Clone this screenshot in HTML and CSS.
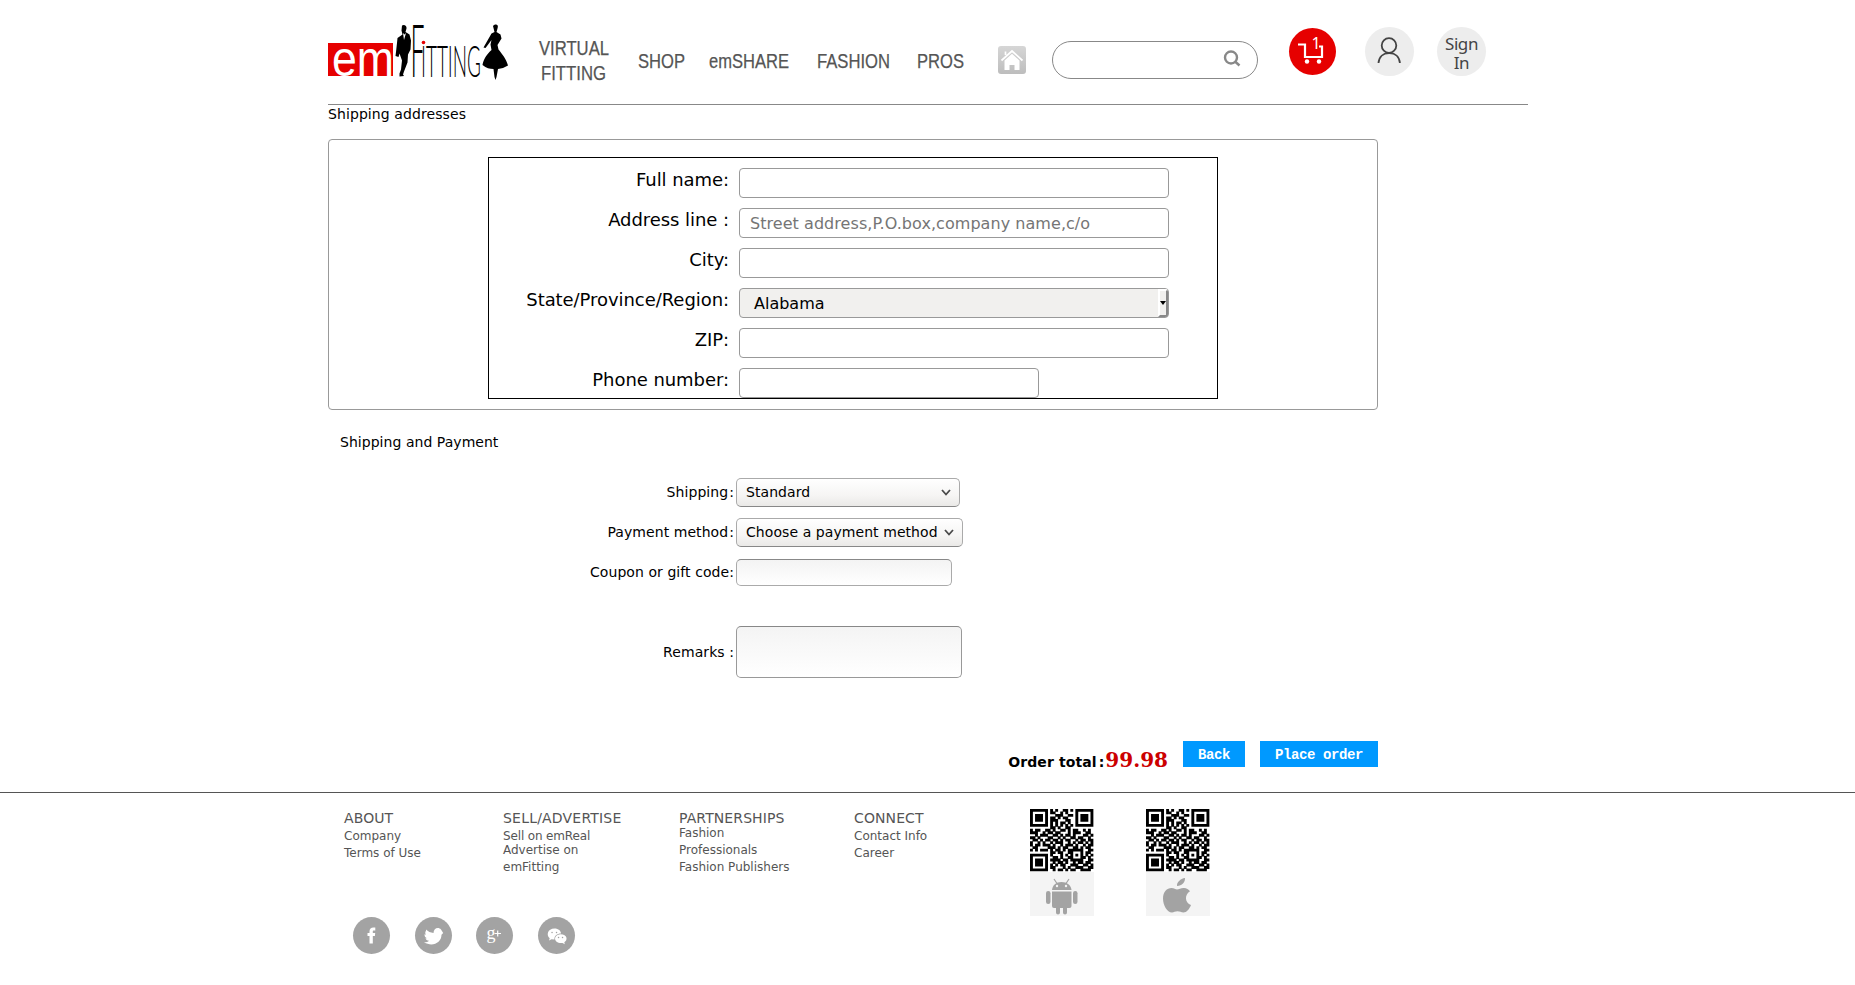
FILE: index.html
```html
<!DOCTYPE html>
<html lang="en">
<head>
<meta charset="utf-8">
<title>emFitting - Checkout</title>
<link rel="stylesheet" href="styles.css">
</head>
<body>
<header class="header">
  <svg class="logo" width="184" height="64" viewBox="0 0 184 64">
    <rect y="23" width="65" height="33" fill="#e60000"/>
    <text class="logo-em" x="4" y="55.500" textLength="62" lengthAdjust="spacingAndGlyphs">em</text>
    <path d="M74 5.500c2-1.500 5 0 4.500 3l-1 3.500 4 2.500 1.500 6-.5 9-2.500 5-.5 8-3.500 9-1 3 1 1.500-4.500.5v-3l1.500-4 1-9-2.500-7-1 3.500-3-1 .5-4 1-9 .5-5 5-3.500-1-4z"/>
    <path d="M75 13l1 7 2-7-1.500 1.500z" fill="#fff"/>
    <text class="logo-f" x="82.500" y="56.500" textLength="14" lengthAdjust="spacingAndGlyphs">F</text>
    <text class="logo-rest" x="93" y="56.500" textLength="60" lengthAdjust="spacingAndGlyphs">ITTING</text>
    <circle cx="95.500" cy="22.500" r="1.800" fill="#e60000"/>
    <path d="M165 6c3-3 6-1 4.500 2.500l-1 3.500 4 2.500 1 4-4 6.500 1 4.500c4 5 7.500 9 9.500 16l-5 2.500-5 1-1.500 8-1 3-1-3-1-8c-4 0-7-1-11-4 1-6 4.500-11 9-15l-1-5.500 1-4.500-6 8-2-.5 8-14 3-1.500z"/>
  </svg>
  <nav class="nav">
    <svg class="nav-virtual" width="74" height="56"><text x="1" y="19" textLength="70" lengthAdjust="spacingAndGlyphs">VIRTUAL</text><text x="3" y="44" textLength="65" lengthAdjust="spacingAndGlyphs">FITTING</text></svg>
    <svg class="nav-shop" width="48" height="30"><text x="0" y="20" textLength="47" lengthAdjust="spacingAndGlyphs">SHOP</text></svg>
    <svg class="nav-share" width="82" height="30"><text x="0" y="20" textLength="80" lengthAdjust="spacingAndGlyphs">emSHARE</text></svg>
    <svg class="nav-fashion" width="76" height="30"><text x="0" y="20" textLength="73" lengthAdjust="spacingAndGlyphs">FASHION</text></svg>
    <svg class="nav-pros" width="50" height="30"><text x="0" y="20" textLength="47" lengthAdjust="spacingAndGlyphs">PROS</text></svg>
  </nav>
  <svg class="home" width="28" height="28" viewBox="0 0 28 28">
    <defs><linearGradient id="hg" x1="0" y1="0" x2="0" y2="1"><stop offset="0" stop-color="#d6d6d6"/><stop offset="1" stop-color="#bdbdbd"/></linearGradient></defs>
    <rect width="28" height="28" rx="3" fill="url(#hg)"/>
    <path d="M7.500 9V5.500M3.500 14.500L14 5l10.500 9.500" fill="none" stroke="#fff" stroke-width="1.700"/>
    <path d="M6.500 14.500L14 7.800l7.500 6.700V24h-5v-5h-5v5h-5z" fill="#fff"/>
  </svg>
  <div class="search">
    <svg width="18" height="18" viewBox="0 0 18 18" fill="none" stroke="#888" stroke-width="2.400"><circle cx="8" cy="7.500" r="6"/><path d="M12 11.500l4.500 4"/></svg>
  </div>
  <svg class="cart" width="47" height="47" viewBox="0 0 47 47">
    <circle cx="23.500" cy="23.500" r="23.500" fill="#e60000"/>
    <path d="M9 16.500h7V29h17V18.500h-3" fill="none" stroke="#fff" stroke-width="2.200"/>
    <circle cx="18" cy="33.500" r="2.200" fill="#fff"/><circle cx="30" cy="33.500" r="2.200" fill="#fff"/>
    <text class="cart-count" x="22.500" y="21">1</text>
  </svg>
  <svg class="user" width="49" height="49" viewBox="0 0 49 49">
    <circle cx="24.500" cy="24.500" r="24.500" fill="#ededed"/>
    <g fill="none" stroke="#444" stroke-width="1.800"><circle cx="24" cy="18.500" r="7.300"/><path d="M13.500 36c.5-6.500 5-10 10.700-10s10.200 3.500 10.700 10"/></g>
  </svg>
  <div class="signin">Sign<br>In</div>
</header>

<main class="main">
  <h2 class="title">Shipping addresses</h2>
  <section class="panel">
    <form class="address">
      <div class="row"><label>Full name:</label><input type="text"></div>
      <div class="row"><label>Address line :</label><input type="text" placeholder="Street address,P.O.box,company name,c/o"></div>
      <div class="row"><label>City:</label><input type="text"></div>
      <div class="row"><label>State/Province/Region:</label><div class="state"><span>Alabama</span><i class="state-btn"><svg width="6" height="4"><path d="M0 0h6L3 4z"/></svg></i></div></div>
      <div class="row"><label>ZIP:</label><input type="text"></div>
      <div class="row"><label>Phone number:</label><input class="phone" type="text"></div>
    </form>
  </section>
  <h2 class="title pay-title">Shipping and Payment</h2>
  <section class="pay">
    <div class="pay-row"><label>Shipping<b>:</b></label><div class="drop drop-ship">Standard<svg width="10" height="7"><path d="M1 1l4 4.500L9 1"/></svg></div></div>
    <div class="pay-row"><label>Payment method<b>:</b></label><div class="drop drop-method">Choose a payment method<svg width="10" height="7"><path d="M1 1l4 4.500L9 1"/></svg></div></div>
    <div class="pay-row"><label>Coupon or gift code:</label><input class="coupon" type="text"></div>
    <div class="pay-row remarks-row"><label>Remarks :</label><div class="remarks"></div></div>
  </section>
  <div class="order">
    <span class="order-label">Order total<b>:</b></span><span class="price">99.98</span>
    <div class="btn back">Back</div><div class="btn place">Place order</div>
  </div>
</main>

<footer class="footer">
  <div class="foot">
    <div class="links">
      <div class="col about"><h3>ABOUT</h3><a>Company</a><a>Terms of Use</a></div>
      <div class="col sell"><h3>SELL/ADVERTISE</h3><a class="tight">Sell on emReal</a><a>Advertise on</a><a>emFitting</a></div>
      <div class="col partner"><h3>PARTNERSHIPS</h3><a>Fashion</a><a>Professionals</a><a>Fashion Publishers</a></div>
      <div class="col connect"><h3>CONNECT</h3><a>Contact Info</a><a>Career</a></div>
      <div class="app">
        <svg class="qr" width="63" height="62" viewBox="0 0 25 25" preserveAspectRatio="none"></svg>
        <div class="platform"><svg width="34" height="37" viewBox="0 0 34 37" fill="#a3a3a3"><path d="M7 12C7.500 7 11 4 16.500 4S26 7 26.500 12z"/><path d="M9 1l3 4.500M24 1l-3 4.500" stroke="#a3a3a3" stroke-width="1.200"/><circle cx="12" cy="8" r="1.200" fill="#f4f4f4"/><circle cx="21" cy="8" r="1.200" fill="#f4f4f4"/><path d="M7 13.500h19.500V28q0 2-2 2h-2.500v4.500q0 2-2 2t-2-2V30h-3v4.500q0 2-2 2t-2-2V30H9q-2 0-2-2z"/><rect x="1" y="13" width="4.500" height="13" rx="2.200"/><rect x="28" y="13" width="4.500" height="13" rx="2.200"/></svg></div>
      </div>
      <div class="app">
        <svg class="qr" width="63" height="62" viewBox="0 0 25 25" preserveAspectRatio="none"></svg>
        <div class="platform"><svg width="34" height="37" viewBox="0 0 34 37" fill="#a3a3a3"><path d="M24 0c.3 4-3 7.800-8 8C15.500 4.500 19.500.5 24 0z"/><path d="M16 11.500c2 0 4-1.700 7-1.500 2.500.2 4.700 1.300 6 3.300-6 3.800-5 11.500 1 13.700-1.500 4-4.500 7.500-7.500 7.500-2.500 0-3.500-1.200-6-1.200s-3.500 1.200-5.500 1.200C6 34.500 2 27 2 20.500S6 10 10.500 10c2.500 0 4 1.500 5.500 1.500z"/></svg></div>
      </div>
    </div>
    <div class="social">
      <svg width="37" height="37" viewBox="0 0 37 37"><circle cx="18.500" cy="18.500" r="18.500"/><path fill="#fff" d="M16.500 26.500V19h-2v-3h2v-1.500c0-2.500 1.500-4 4-4h1.800v3h-1.400c-1 0-1.100.5-1.100 1.200V16h2.400l-.3 3h-2.100v7.500z"/></svg>
      <svg width="37" height="37" viewBox="0 0 37 37"><circle cx="18.500" cy="18.500" r="18.500"/><path fill="#fff" d="M11 12.500c2 2 4.500 3.200 7.500 3.500 0-5 5-6.500 7.500-3.500l2.200 3.500-1.700 1.800c0 8-9 12.500-17.500 7.500 2.500 0 4-.3 5-1.500-2 0-3-1-3.500-2.500h1.500c-2-1-2.500-2-2.500-4l1.500.5c-1-1.300-1-2.500 0-4z"/></svg>
      <svg width="37" height="37" viewBox="0 0 37 37"><circle cx="18.500" cy="18.500" r="18.500"/><text class="gplus" x="10.500" y="22">g</text><path d="M18.500 16.500h6.500M21.700 13.500v6" stroke="#fff" stroke-width="1.200"/></svg>
      <svg width="37" height="37" viewBox="0 0 37 37"><circle cx="18.500" cy="18.500" r="18.500"/><path fill="#fff" d="M16.500 11.500c4 0 6.500 2.500 6.500 5-4 0-7 2.500-6.500 6l-3-.2-2.500 1.200.7-2.300C8 18.500 9.500 11.500 16.500 11.500z"/><path fill="#fff" d="M22.500 17.200c7 0 7.500 6 3.800 8l.5 2-2.300-1.200c-9.500.8-9.500-8.500-2-8.800z"/><path stroke="#a3a3a3" stroke-width="1.400" stroke-linecap="round" d="M14 15.500h.1M18.500 15.500h.1M20.500 20.500h.1M24.500 20.500h.1"/></svg>
    </div>
  </div>
</footer>
<script src="qr.js"></script>
</body>
</html>
```
FILE: styles.css
```css
* { box-sizing: border-box; }
body { margin: 0; background: #fff; color: #000; font-family: "DejaVu Sans", sans-serif; font-size: 14px; }
svg { display: block; flex: none; overflow: visible; }
.header { width: 1200px; height: 105px; margin-left: 328px; border-bottom: 1px solid #888; display: flex; align-items: flex-start; }
.logo { margin-top: 20px; }
.logo-em { font: 50px "Liberation Sans", sans-serif; fill: #fff; }
.logo-f { font: 300 72px Lato, "Liberation Sans", sans-serif; }
.logo-rest { font: 300 43px Lato, "Liberation Sans", sans-serif; }
.nav { display: flex; margin-left: 26px; font: 20px "Liberation Sans Narrow", "Liberation Sans", sans-serif; fill: #555; stroke: #555; stroke-width: .25px; }
.nav-virtual { margin-top: 36px; }
.nav-shop { margin: 48px 0 0 26px; }
.nav-share { margin: 48px 0 0 23px; }
.nav-fashion { margin: 48px 0 0 26px; }
.nav-pros { margin: 48px 0 0 24px; }
.home { margin: 46px 0 0 31px; }
.search { flex: none; width: 206px; height: 38px; margin: 41px 0 0 26px; border: 1px solid #888; border-radius: 19px; display: flex; justify-content: flex-end; padding: 8px 16px 0 0; }
.cart { margin: 28px 0 0 31px; }
.cart-count { font: 16px "Noto Sans", sans-serif; fill: #fff; }
.user { margin: 27px 0 0 29px; }
.signin { flex: none; width: 49px; height: 49px; margin: 27px 0 0 23px; border-radius: 50%; background: #ededed; color: #444; font: 17px/19px "Noto Sans", sans-serif; letter-spacing: -.4px; text-align: center; padding-top: 7px; }
.main { width: 1050px; margin-left: 328px; }
.title { margin: 0; font-size: 14px; font-weight: 400; line-height: 18px; letter-spacing: .09px; }
.panel { margin-top: 16px; height: 271px; border: 1px solid #999; border-radius: 4px; padding: 17px 0 0 159px; }
.address { width: 730px; height: 242px; border: 1px solid #000; }
.row { display: flex; height: 40px; }
.row label { width: 240px; height: 40px; text-align: right; font-size: 18px; line-height: 44px; letter-spacing: -.06px; }
.row input, .state { width: 430px; height: 30px; margin: 10px 0 0 10px; border: 1px solid #999; border-radius: 4px; background: #fff; padding: 0 10px; font: 16px "DejaVu Sans", sans-serif; }
.row input::placeholder { color: #757575; letter-spacing: .05px; }
.row input.phone { width: 300px; }
.state { display: flex; justify-content: space-between; background: #f1f0ee; padding: 0 0 0 14px; line-height: 29px; overflow: hidden; }
.state-btn { width: 10px; height: 28px; background: #f1f0ee; border: 2px solid #fff; border-right-color: #888; border-bottom-color: #888; padding-top: 10px; }
.pay-title { margin: 23px 0 0 12px; letter-spacing: .04px; }
.pay { padding-top: 21px; letter-spacing: .07px; }
.pay-row { display: flex; align-items: center; height: 40px; }
.pay-row label { width: 406px; margin-right: 2px; text-align: right; line-height: 20px; }
.pay-row b { font-weight: 400; margin-left: 1px; }
.drop { height: 29px; margin-top: 1px; border: 1px solid #aaa; border-bottom-color: #888; border-radius: 5px; background: linear-gradient(#fff, #f6f5f4 60%, #eae9e7); display: flex; align-items: center; justify-content: space-between; padding: 0 8px 1px 9px; white-space: nowrap; }
.drop path { fill: none; stroke: #4a4a4a; stroke-width: 1.8; }
.drop-ship { width: 224px; }
.drop-method { width: 227px; }
.coupon { width: 216px; height: 27px; border: 1px solid #aaa; border-top-color: #888; border-radius: 5px; background: linear-gradient(#f3f3f3, #fff); }
.remarks-row { margin-top: 40px; }
.remarks { width: 226px; height: 52px; border: 1px solid #999; border-top-color: #888; border-radius: 5px; background: linear-gradient(#f4f4f4, #fff); }
.order { display: flex; justify-content: flex-end; margin-top: 69px; height: 51px; }
.order-label { font-weight: 700; line-height: 20px; padding-top: 11px; letter-spacing: .1px; }
.order-label b { margin: 0 1px 0 2px; }
.price { color: #c00; font: bold 20px/24px "DejaVu Serif", serif; padding-top: 7px; }
.btn { height: 26px; background: #09f; color: #fff; font: bold 14px/28px "Liberation Mono", monospace; letter-spacing: -.4px; text-align: center; }
.back { width: 62px; margin-left: 15px; }
.place { width: 118px; margin-left: 15px; }
.footer { border-top: 1px solid #555; color: #555; }
.foot { margin-left: 344px; }
.links { display: flex; height: 124px; }
.col { padding-top: 16px; }
.col h3 { margin: 0 0 1px; font-size: 14px; font-weight: 400; line-height: 18px; letter-spacing: .1px; }
.col a { display: block; font-size: 12px; line-height: 17px; }
.col .tight { margin-top: 3px; line-height: 12px; }
.about { width: 159px; }
.sell { width: 176px; }
.sell h3 { letter-spacing: .2px; }
.sell .tight { letter-spacing: -.15px; }
.partner { width: 175px; }
.partner h3 { margin-bottom: -2px; }
.connect { width: 176px; }
.app { width: 116px; padding-top: 16px; }
.platform { width: 64px; height: 44px; margin-top: 1px; background: #f4f4f4; padding: 6px 0 0 15px; }
.social { display: flex; gap: 24.7px; margin-left: 9px; }
.social circle { fill: #a3a3a3; }
.social .gplus { font: 18px "Liberation Serif", serif; fill: #fff; }
```
FILE: qr.js
```js
const rows = [
  "1111111010100110101111111", "1000001011001010001000001",
  "1011101000111001101011101", "1011101011010110001011101",
  "1011101011100011001011101", "1000001010101101001000001",
  "1111111010101010101111111", "0000000011010011000000000",
  "1011001101001101011001010", "1110010110110001011100110",
  "0010111001101011010001101", "1101000110010100110110010",
  "0110101101101011001011011", "1001010010111001010110101",
  "1011011101001011101001011", "0110000111010110011010110",
  "1010111010110101111110011", "0000000011011001100010110",
  "1111111010001010101010101", "1000001001101001100011010",
  "1011101011110110111110011", "1011101001011010010110110",
  "1011101010101100111001101", "1000001011000101001110011",
  "1111111001011010110011110"
];
let d = "";
rows.forEach((r, y) => [...r].forEach((c, x) => { if (c === "1") d += `M${x} ${y}h1.150v1.150h-1.150z`; }));
document.querySelectorAll(".qr").forEach(s => { s.innerHTML = `<path d="${d}"/>`; });
```
